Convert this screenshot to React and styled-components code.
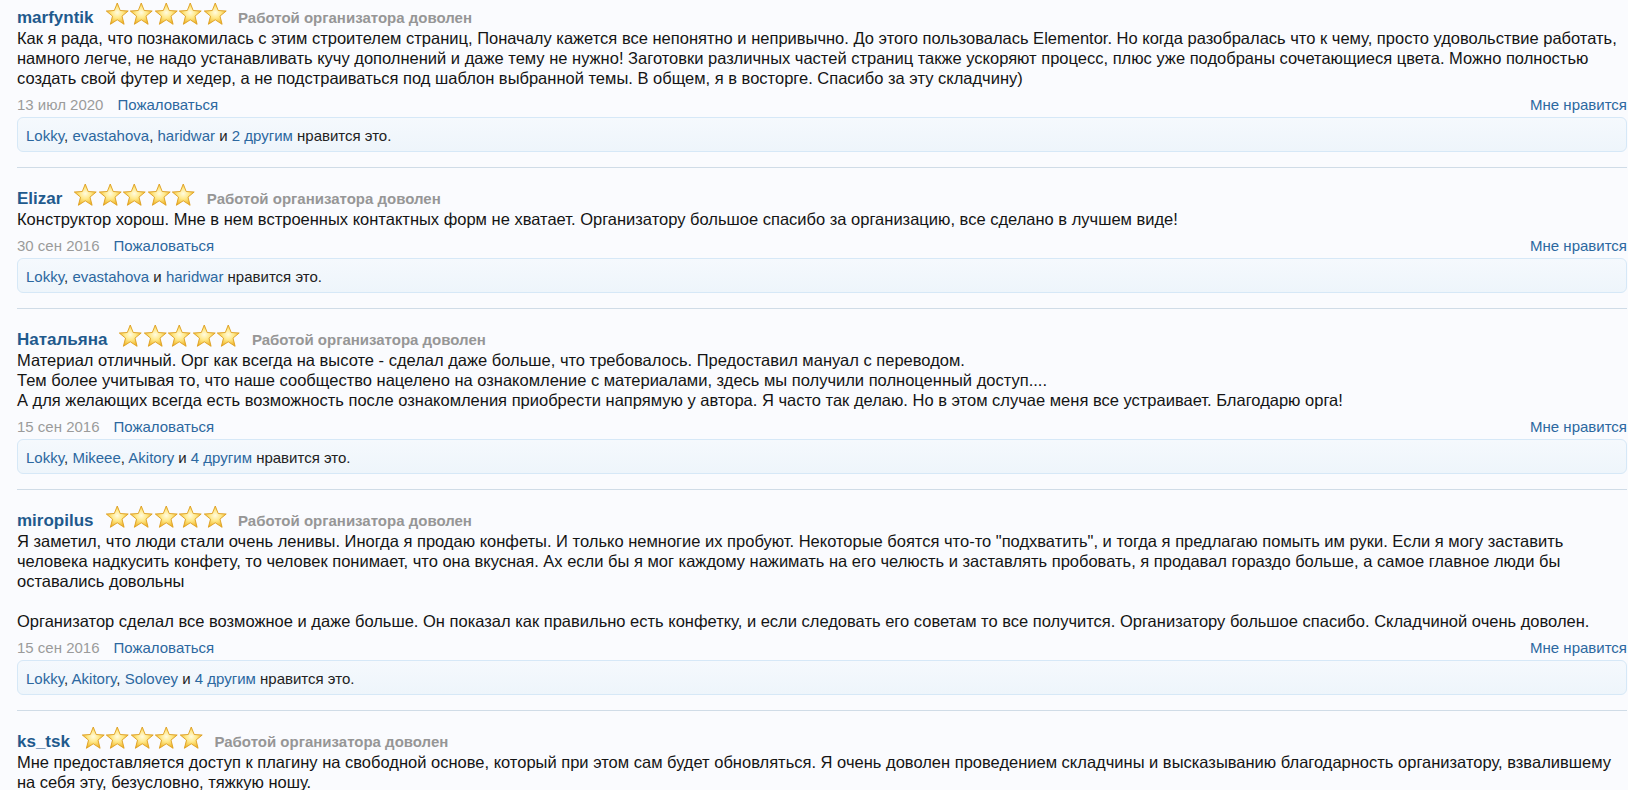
import React from 'react';
import styled, { createGlobalStyle } from 'styled-components';

const Global = createGlobalStyle`
  html, body { margin: 0; padding: 0; background: #fafbfe; }
  body { font-family: "Liberation Sans", Arial, sans-serif; overflow: hidden; }
`;

const Page = styled.div`
  padding: 0 1px 0 17px;
  margin-top: -13px;
`;

const Review = styled.div`
  padding: 20px 0 15px;
  border-bottom: 1px solid #d0dce7;
`;

const Header = styled.div`
  display: flex;
  align-items: center;
  height: 21px;
  white-space: nowrap;
`;

const Author = styled.a`
  color: #1f5a8d;
  font-weight: bold;
  font-size: 17px;
  line-height: 21px;
  text-decoration: none;
`;

const Stars = styled.span`
  display: flex;
  align-self: flex-start;
  margin: -5px 11px 0 11px;
  height: 24px;
`;

const Rating = styled.span`
  color: #969696;
  font-weight: bold;
  font-size: 15px;
  line-height: 21px;
`;

const Body = styled.div`
  font-size: 16.5px;
  line-height: 20px;
  color: #141414;
`;

const Meta = styled.div`
  display: flex;
  justify-content: space-between;
  margin-top: 6px;
  font-size: 15px;
  line-height: 21px;
`;

const DateText = styled.span`
  color: #9b9b9b;
  margin-right: 14px;
`;

const Link = styled.a`
  color: #2c68a0;
  text-decoration: none;
`;

const Likes = styled.div`
  margin-top: 2px;
  border: 1px solid #d6e8f7;
  border-radius: 6px;
  background: linear-gradient(#f5f9fd, #eef5fb);
  padding: 8px 8px 6px;
  font-size: 15px;
  line-height: 19px;
  color: #222;
`;

const StarGradient = () => (
  <svg width="0" height="0" style={{ position: 'absolute' }} aria-hidden="true">
    <defs>
      <radialGradient id="starFill" cx="50%" cy="45%" r="55%">
        <stop offset="0%" stopColor="#fffbe0" />
        <stop offset="45%" stopColor="#ffe98a" />
        <stop offset="100%" stopColor="#f0b526" />
      </radialGradient>
    </defs>
  </svg>
);

const Star = () => (
  <svg width="24.5" height="24" viewBox="0 0 24.5 24">
    <path
      d="M12.25 1 L15.2 8.5 L23.2 9 L17 14.1 L19.1 22.3 L12.25 17.8 L5.4 22.3 L7.5 14.1 L1.3 9 L9.3 8.5 Z"
      fill="url(#starFill)"
      stroke="#dc9d1e"
      strokeWidth="0.9"
      strokeLinejoin="round"
    />
  </svg>
);

const reviews = [
  {
    author: 'marfyntik',
    body: [
      'Как я рада, что познакомилась с этим строителем страниц, Поначалу кажется все непонятно и непривычно. До этого пользовалась Elementor. Но когда разобралась что к чему, просто удовольствие работать, намного легче, не надо устанавливать кучу дополнений и даже тему не нужно! Заготовки различных частей страниц также ускоряют процесс, плюс уже подобраны сочетающиеся цвета. Можно полностью создать свой футер и хедер, а не подстраиваться под шаблон выбранной темы. В общем, я в восторге. Спасибо за эту складчину)',
    ],
    date: '13 июл 2020',
    likes: ['Lokky', 'evastahova', 'haridwar'],
    others: 2,
  },
  {
    author: 'Elizar',
    body: [
      'Конструктор хорош. Мне в нем встроенных контактных форм не хватает. Организатору большое спасибо за организацию, все сделано в лучшем виде!',
    ],
    date: '30 сен 2016',
    likes: ['Lokky', 'evastahova', 'haridwar'],
    others: 0,
  },
  {
    author: 'Натальяна',
    body: [
      'Материал отличный. Орг как всегда на высоте - сделал даже больше, что требовалось. Предоставил мануал с переводом.',
      'Тем более учитывая то, что наше сообщество нацелено на ознакомление с материалами, здесь мы получили полноценный доступ....',
      'А для желающих всегда есть возможность после ознакомления приобрести напрямую у автора. Я часто так делаю. Но в этом случае меня все устраивает. Благодарю орга!',
    ],
    date: '15 сен 2016',
    likes: ['Lokky', 'Mikeee', 'Akitory'],
    others: 4,
  },
  {
    author: 'miropilus',
    body: [
      'Я заметил, что люди стали очень ленивы. Иногда я продаю конфеты. И только немногие их пробуют. Некоторые боятся что-то "подхватить", и тогда я предлагаю помыть им руки. Если я могу заставить человека надкусить конфету, то человек понимает, что она вкусная. Ах если бы я мог каждому нажимать на его челюсть и заставлять пробовать, я продавал гораздо больше, а самое главное люди бы оставались довольны',
      '',
      'Организатор сделал все возможное и даже больше. Он показал как правильно есть конфетку, и если следовать его советам то все получится. Организатору большое спасибо. Складчиной очень доволен.',
    ],
    date: '15 сен 2016',
    likes: ['Lokky', 'Akitory', 'Solovey'],
    others: 4,
  },
  {
    author: 'ks_tsk',
    body: [
      'Мне предоставляется доступ к плагину на свободной основе, который при этом сам будет обновляться. Я очень доволен проведением складчины и высказыванию благодарность организатору, взвалившему на себя эту, безусловно, тяжкую ношу.',
    ],
    date: '15 сен 2016',
    likes: ['Lokky'],
    others: 0,
  },
];

const LikeLine = ({ names, others }) => {
  if (others > 0) {
    return (
      <>
        {names.map((n, i) => (
          <React.Fragment key={n}>
            <Link href="#">{n}</Link>
            {i < names.length - 1 ? ', ' : ''}
          </React.Fragment>
        ))}
        {' и '}
        <Link href="#">{others} другим</Link> нравится это.
      </>
    );
  }
  const head = names.slice(0, -1);
  const last = names[names.length - 1];
  return (
    <>
      {head.map((n, i) => (
        <React.Fragment key={n}>
          <Link href="#">{n}</Link>
          {i < head.length - 1 ? ', ' : ''}
        </React.Fragment>
      ))}
      {head.length ? ' и ' : ''}
      <Link href="#">{last}</Link> нравится это.
    </>
  );
};

export default function App() {
  return (
    <>
      <Global />
      <StarGradient />
      <Page>
        {reviews.map((r) => (
          <Review key={r.author}>
            <Header>
              <Author href="#">{r.author}</Author>
              <Stars>
                {[0, 1, 2, 3, 4].map((i) => (
                  <Star key={i} />
                ))}
              </Stars>
              <Rating>Работой организатора доволен</Rating>
            </Header>
            <Body>
              {r.body.map((line, i) => (
                <React.Fragment key={i}>
                  {i > 0 && <br />}
                  {line}
                </React.Fragment>
              ))}
            </Body>
            <Meta>
              <span>
                <DateText>{r.date}</DateText>
                <Link href="#">Пожаловаться</Link>
              </span>
              <Link href="#">Мне нравится</Link>
            </Meta>
            <Likes>
              <LikeLine names={r.likes} others={r.others} />
            </Likes>
          </Review>
        ))}
      </Page>
    </>
  );
}
